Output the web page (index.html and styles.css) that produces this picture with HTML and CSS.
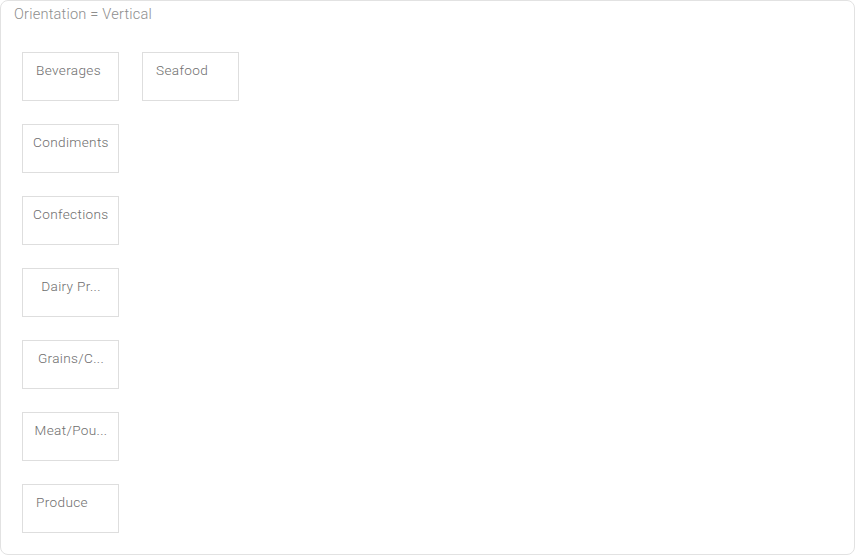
FILE: index.html
```html
<!DOCTYPE html>
<html lang="en">
<head>
    <meta charset="UTF-8">
    <meta name="viewport" content="width=device-width, initial-scale=1.0">
    <title>Tile View</title>
    <link rel="stylesheet" href="styles.css">
</head>
<body>
    <div id="container">
        <div class="caption">Orientation = Vertical</div>

        <div class="tiles">
            <div class="tile"><span class="tile-text">Beverages</span></div>
            <div class="tile"><span class="tile-text narrow">Condiments</span></div>
            <div class="tile"><span class="tile-text narrow">Confections</span></div>
            <div class="tile"><span class="tile-text cut">Dairy Pr...</span></div>
            <div class="tile"><span class="tile-text cut">Grains/C...</span></div>
            <div class="tile"><span class="tile-text cut">Meat/Pou...</span></div>
            <div class="tile"><span class="tile-text">Produce</span></div>
            <div class="tile"><span class="tile-text">Seafood</span></div>
        </div>
    </div>
</body>
</html>
```

FILE: styles.css
```css
body {
    margin: 0;
    font-family: Roboto, "Liberation Sans", sans-serif;
    background-color: #fff;
}

#container {
    box-sizing: border-box;
    width: 855px;
    height: 555px;
    border: 1px solid #e2e2e2;
    border-radius: 8px;
    padding: 5px 13px;
}

.caption {
    font-size: 14.6px;
    font-weight: 300;
    line-height: 17px;
    letter-spacing: 0.2px;
    color: #8e8e8e;
}

.tiles {
    display: grid;
    grid-template-rows: repeat(7, 49px);
    grid-auto-flow: column;
    grid-auto-columns: 97px;
    column-gap: 23px;
    row-gap: 23px;
    margin-top: 29px;
    margin-left: 8px;
}

.tile {
    box-sizing: border-box;
    border: 1px solid #dedede;
    padding: 9px 9px 0 10px;
    overflow: hidden;
}

.tile-text {
    display: block;
    padding-left: 3px;
    font-size: 13.6px;
    font-weight: 300;
    line-height: 16px;
    letter-spacing: 0.35px;
    color: #6e6e6e;
    white-space: nowrap;
}

.tile-text.narrow {
    padding-left: 0;
}

.tile-text.cut {
    text-align: center;
    padding-left: 0;
}
```
